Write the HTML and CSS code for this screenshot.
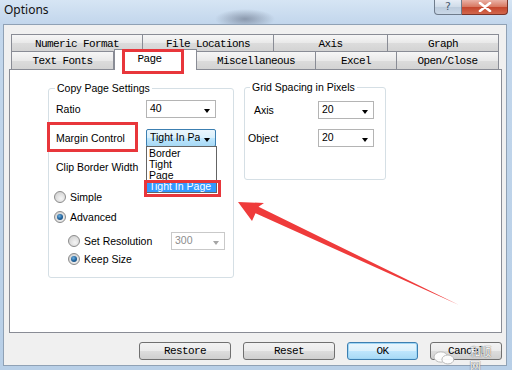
FILE: index.html
```html
<!DOCTYPE html>
<html>
<head>
<meta charset="utf-8">
<link rel="stylesheet" href="styles.css">
</head>
<body>
<div class="window">
  <div class="titlebar">
    <span class="title">Options</span>
    <div class="caption-btns">
      <span class="cbtn help">?</span>
      <span class="cbtn close"><svg width="14" height="10" viewBox="0 0 14 10"><path d="M2 1 L12 9 M12 1 L2 9" stroke="#fff" stroke-width="2.6" stroke-linecap="round"/></svg></span>
    </div>
  </div>
  <div class="client">
    <div class="tabs">
      <div class="tabrow">
        <div class="tab first w132">Numeric Format</div>
        <div class="tab w131">File Locations</div>
        <div class="tab w114">Axis</div>
        <div class="tab w111">Graph</div>
      </div>
      <div class="tabrow row2">
        <div class="tab first w103">Text Fonts</div>
        <div class="tab sel w83">Page</div>
        <div class="tab w119">Miscellaneous</div>
        <div class="tab w81">Excel</div>
        <div class="tab w102">Open/Close</div>
      </div>
    </div>
    <div class="panel">
      <div class="group g1">
        <div class="legend">Copy Page Settings</div>
        <div class="field first-field">
          <span class="lbl w90">Ratio</span>
          <span class="combo w70">40</span>
        </div>
        <div class="field">
          <span class="lbl w90">Margin Control</span>
          <span class="combo w70 hot"><span class="clip">Tight In Page</span>
            <span class="droplist">
              <span class="item">Border</span>
              <span class="item">Tight</span>
              <span class="item">Page</span>
              <span class="item selitem">Tight In Page</span>
            </span>
          </span>
        </div>
        <div class="field">
          <span class="lbl w90">Clip Border Width</span>
        </div>
        <div class="radio r-simple"><span class="dot"></span><span>Simple</span></div>
        <div class="radio r-adv"><span class="dot on"></span><span>Advanced</span></div>
        <div class="radio sub r-res"><span class="dot"></span><span class="res-label">Set Resolution</span><span class="combo w54 disabled">300</span></div>
        <div class="radio sub r-keep"><span class="dot on"></span><span>Keep Size</span></div>
      </div>
      <div class="group g2">
        <div class="legend">Grid Spacing in Pixels</div>
        <div class="field f-axis">
          <span class="lbl w70 indent">Axis</span>
          <span class="combo w56">20</span>
        </div>
        <div class="field f-obj">
          <span class="lbl w70">Object</span>
          <span class="combo w56">20</span>
        </div>
      </div>
    </div>
    <div class="buttons">
      <span class="btn w92">Restore</span>
      <span class="btn w92">Reset</span>
      <span class="btn w71 default">OK</span>
      <span class="btn w72 cancel">Cancel
        <span class="watermark"><svg width="22" height="14" viewBox="0 0 22 14"><ellipse cx="8" cy="6" rx="7" ry="5.2" fill="#fff" stroke="#b8b8b8"/><ellipse cx="15" cy="8.5" rx="6" ry="4.5" fill="#fff" stroke="#b8b8b8"/></svg><span class="wm-text">和顺网</span></span>
      </span>
    </div>
  </div>
</div>
<svg class="marks" width="512" height="370" viewBox="0 0 512 370">
  <rect x="123.5" y="50.5" width="59" height="22" fill="none" stroke="#e8363b" stroke-width="3"/>
  <rect x="48.5" y="123.5" width="88" height="27" fill="none" stroke="#e8363b" stroke-width="3"/>
  <rect x="145.5" y="181.5" width="74" height="14" fill="none" stroke="#e8363b" stroke-width="3"/>
  <polygon points="238,202 264,203 258.5,206.8 459,305 255.5,213.2 252,221" fill="#ef3b3b"/>
</svg>
</body>
</html>
```
FILE: styles.css
```css
html, body {
  margin: 0;
  padding: 0;
}
body {
  width: 512px;
  height: 370px;
  overflow: hidden;
  position: relative;
  background: #b9d0e8;
  font-family: "Liberation Sans", Arial, sans-serif;
  font-size: 10.5px;
  color: #000;
}
.window {
  display: flex;
  flex-direction: column;
  height: 370px;
  background: linear-gradient(180deg, #cddff1 0px, #c3d7ec 24px, #b8cfe7 100%);
}
.titlebar {
  height: 24px;
  display: flex;
  align-items: flex-start;
  padding-left: 4px;
  background: radial-gradient(ellipse 30px 10px at 245px 19px, rgba(90,100,120,0.55), rgba(90,100,120,0) 100%),
              linear-gradient(180deg, #d6e5f4, #c2d6ec);
}
.title {
  font-family: "Noto Sans", "Open Sans", sans-serif;
  font-size: 12px;
  line-height: 20px;
  color: #111;
}
.caption-btns {
  margin-left: auto;
  margin-right: 4px;
  display: flex;
}
.cbtn {
  height: 15px;
  box-sizing: border-box;
  border: 1px solid #6f7c8c;
  border-top: 0;
  display: flex;
  align-items: center;
  justify-content: center;
}
.help {
  width: 28px;
  border-radius: 0 0 0 4px;
  background: linear-gradient(180deg, #e6edf6, #cfdbe8 50%, #bccbdc 51%, #cad8e7);
  font-family: "DejaVu Sans", sans-serif;
  font-size: 11px;
  color: #4b5a70;
  line-height: 14px;
}
.close {
  width: 46px;
  border-left: 0;
  border-color: #7a3328;
  border-radius: 0 0 4px 0;
  background: linear-gradient(180deg, #eab2a6, #d7765f 50%, #c4452c 51%, #d2674c);
}
.client {
  flex: 1;
  margin: 0 5px 4px 3px;
  border: 1px solid #8fa1b5;
  background: #f0f0f0;
  display: flex;
  flex-direction: column;
}
.tabs {
  margin: 9px 0 0 7px;
}
.tabrow {
  display: flex;
  height: 17px;
}
.tabrow.row2 {
  height: 18px;
}
.tab {
  box-sizing: border-box;
  height: 100%;
  border: 1px solid #898c95;
  border-left: 0;
  border-bottom: 0;
  background: linear-gradient(180deg, #f6f6f6, #e9e9e9 50%, #dcdcdc 51%, #d3d3d3);
  font-family: "Liberation Mono", "DejaVu Sans Mono", monospace;
  font-size: 11px;
  letter-spacing: -0.6px;
  display: flex;
  align-items: center;
  justify-content: center;
  padding-top: 1px;
}
.tab.first {
  border-left: 1px solid #898c95;
}
.tab.sel {
  position: relative;
  z-index: 2;
  height: 21px;
  margin-top: -2px;
  border-left: 1px solid #898c95;
  background: #fff;
  padding-right: 12px;
  padding-top: 1px;
  align-items: flex-start;
  line-height: 17px;
}
.w132 { width: 132px; }
.w131 { width: 131px; }
.w114 { width: 114px; }
.w111 { width: 111px; }
.w103 { width: 103px; }
.w83 { width: 83px; }
.w119 { width: 119px; }
.w81 { width: 81px; }
.w102 { width: 102px; }
.panel {
  margin-left: 5px;
  width: 493px;
  height: 264px;
  box-sizing: border-box;
  border: 1px solid #898c95;
  background: #fff;
  display: flex;
  align-items: flex-start;
  gap: 10px;
  padding: 18px 0 0 38px;
}
.group {
  box-sizing: border-box;
  border: 1px solid #d5dfe5;
  border-radius: 3px;
  background: #fff;
}
.g1 {
  width: 186px;
  height: 190px;
}
.g2 {
  width: 142px;
  height: 93px;
  margin-top: -1px;
}
.legend {
  display: table;
  margin: -7px 0 0 6px;
  padding: 0 2px;
  line-height: 12px;
  background: #fff;
}
.g2 .legend {
  margin-left: 5px;
}
.field {
  display: flex;
  align-items: center;
  height: 18px;
  margin-top: 11px;
  padding-left: 7px;
}
.field.first-field {
  margin-top: 6px;
}
.g2 .field {
  padding-left: 3px;
}
.g2 .f-axis {
  margin-top: 8px;
}
.g2 .f-obj {
  margin-top: 10px;
}
.lbl {
  flex: none;
  white-space: nowrap;
}
.w90 { width: 90px; }
.w70 { width: 70px; }
.indent { padding-left: 6px; box-sizing: border-box; }
.combo {
  position: relative;
  box-sizing: border-box;
  height: 18px;
  border: 1px solid #b4b4b4;
  background: #fff;
  padding-left: 3px;
  line-height: 15px;
  flex: none;
  white-space: nowrap;
}
.combo::after {
  content: "";
  position: absolute;
  right: 5px;
  top: 8px;
  border-left: 3.5px solid transparent;
  border-right: 3.5px solid transparent;
  border-top: 4px solid #000;
}
.combo.w70 { width: 70px; }
.combo.w56 { width: 56px; }
.combo.w54 { width: 54px; }
.combo.hot {
  border-color: #3c7fb1;
  border-radius: 2px;
  background: linear-gradient(180deg, #eaf6fd, #d9f0fc 50%, #bee6fd 51%, #a7d9f5);
}
.clip {
  display: block;
  width: 50px;
  overflow: hidden;
}
.combo.disabled {
  border-color: #c9c9c9;
  color: #8d8d8d;
}
.combo.disabled::after {
  border-top-color: #a5a5a5;
}
.droplist {
  position: absolute;
  z-index: 3;
  left: -1px;
  top: 16px;
  width: 71px;
  box-sizing: border-box;
  border: 1px solid #646464;
  background: #fff;
  display: flex;
  flex-direction: column;
  padding-top: 1px;
}
.item {
  line-height: 11px;
  height: 11px;
  padding-left: 2px;
  color: #000;
}
.item.selitem {
  background: #3399ff;
  color: #fff;
}
.radio {
  display: flex;
  align-items: center;
  gap: 4px;
  height: 16px;
  padding-left: 5px;
}
.radio.sub {
  padding-left: 19px;
}
.r-simple { margin-top: 13px; }
.r-adv { margin-top: 4px; }
.r-res { margin-top: 7px; height: 18px; }
.r-keep { margin-top: 1px; }
.res-label {
  width: 83px;
  flex: none;
}
.dot {
  position: relative;
  width: 12px;
  height: 12px;
  box-sizing: border-box;
  border-radius: 50%;
  border: 1px solid #8b8b8b;
  background: radial-gradient(circle at 60% 65%, #f5f5f5, #d6d6d6 70%, #c8c8c8);
  flex: none;
}
.dot.on::after {
  content: "";
  position: absolute;
  left: 2px;
  top: 2px;
  width: 6px;
  height: 6px;
  border-radius: 50%;
  background: radial-gradient(circle at 40% 35%, #6fb0e0, #1d5f98 55%, #0f3f6e);
}
.buttons {
  display: flex;
  justify-content: flex-end;
  gap: 12px;
  margin-top: 9px;
  padding-right: 4px;
}
.btn {
  position: relative;
  box-sizing: border-box;
  height: 18px;
  border: 1px solid #707070;
  border-radius: 3px;
  background: linear-gradient(180deg, #f2f2f2, #ebebeb 50%, #dddddd 51%, #cfcfcf);
  font-family: "Liberation Mono", "DejaVu Sans Mono", monospace;
  font-size: 11px;
  letter-spacing: -0.6px;
  display: flex;
  align-items: center;
  justify-content: center;
}
.btn.w92 { width: 92px; }
.btn.w71 { width: 71px; }
.btn.w72 { width: 72px; }
.btn.default {
  border-color: #3c7fb1;
  box-shadow: inset 0 0 0 1px #9fd6f5;
  background: linear-gradient(180deg, #eaf6fd, #d9f0fc 50%, #bee6fd 51%, #a7d9f5);
}
.watermark {
  position: absolute;
  left: 2px;
  top: 1px;
  display: flex;
  align-items: center;
  opacity: 0.95;
}
.wm-text {
  font-family: "Noto Sans CJK SC", sans-serif;
  font-size: 11px;
  line-height: 14px;
  color: #fff;
  letter-spacing: -0.5px;
  margin-left: 15px;
  text-shadow: 0 0 1px #666, 0 0 1px #666;
}
.marks {
  position: absolute;
  z-index: 10;
  left: 0;
  top: 0;
  pointer-events: none;
}
```
